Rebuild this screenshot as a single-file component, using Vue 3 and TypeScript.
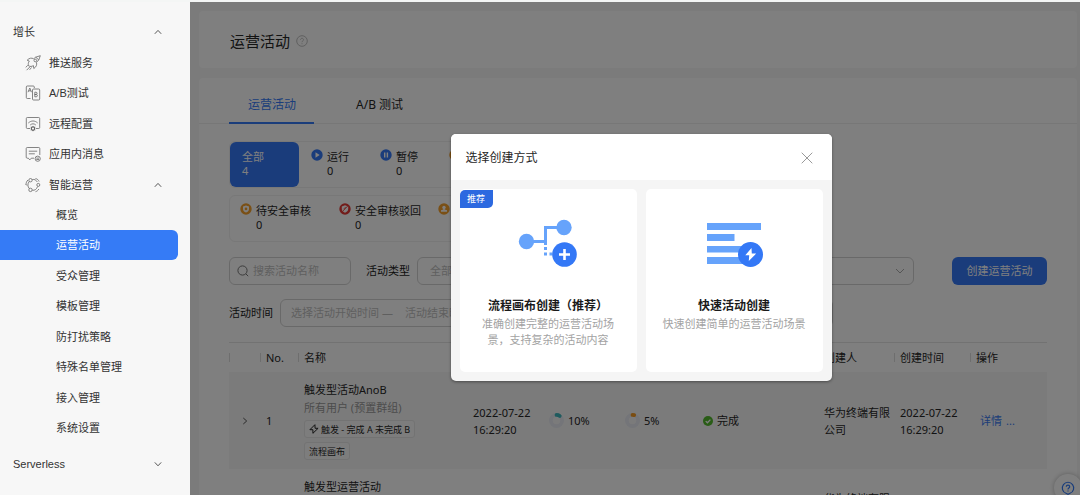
<script setup lang="ts">
import { ref } from 'vue'

interface Campaign {
  name: string
  audience: string
  trigger?: string
  kind: string
  time: [string, string]
  reach: number
  convert: number
  status: string
  creator: string
}

const services = ['推送服务', 'A/B测试', '远程配置', '应用内消息']
const pages = ['概览', '运营活动', '受众管理', '模板管理', '防打扰策略', '特殊名单管理', '接入管理', '系统设置']
const activePage = ref('运营活动')
const activeTab = ref('运营活动')
const keyword = ref('')

const campaigns: Campaign[] = [
  {
    name: '触发型活动AnoB',
    audience: '所有用户 (预置群组)',
    trigger: '触发 - 完成 A 未完成 B',
    kind: '流程画布',
    time: ['2022-07-22', '16:29:20'],
    reach: 10,
    convert: 5,
    status: '完成',
    creator: '华为终端有限公司',
  },
  {
    name: '触发型运营活动',
    audience: '所有用户 (预置群组)',
    kind: '流程画布',
    time: ['2022-07-22', '16:29:20'],
    reach: 10,
    convert: 5,
    status: '完成',
    creator: '华为终端有限公司',
  },
]
</script>

<template>
  <div class="shell">
    <nav class="sidebar" aria-label="主导航">
      <button class="row group" type="button">
        <span>增长</span>
        <svg class="chev" viewBox="0 0 8 8"><path d="M.8 5.8 4 2.4 7.2 5.8" /></svg>
      </button>
      <ul class="menu services">
        <li v-for="(name, i) in services" :key="name">
          <a class="row service" href="#">
            <svg v-if="i === 0" class="icon" viewBox="0 0 16 16">
              <path d="M15.300.7l-4.600 1.500-2 1.600C6.500 2.600 4.300 3 2.200 5.200l2.100.9c-1.100 1.500-1.300 3-.7 4.700 1.600 1 3.200.8 4.800-.2l.4 2.900c2.500-1.600 3.300-3.600 2.700-6.200l2.300-2.400z" />
              <circle cx="10.300" cy="5.500" r="1.300" />
              <path d="M10.700 2.200l3.100 2.700M2.800 10.300.7 12.400M4.900 11.900l-3.300 3.300M6.500 12.500l-1.900 2.300" />
            </svg>
            <svg v-else-if="i === 1" class="icon" viewBox="0 0 16 16">
              <path d="M5.500 13.500H2.300c-.7 0-1-.4-1-1V2c0-.7.4-1 1-1h6c.7 0 1 .4 1 1v1" />
              <rect x="7.500" y="4" width="7.200" height="11" rx="1" />
              <path d="M3 7.200 4.800 3l1.700 4.200M3.600 5.800h2.300M9.800 7.200v4.600h1.400c1.600 0 1.600-2.300 0-2.300H9.800h1.200c1.500 0 1.500-2.300 0-2.300z" />
            </svg>
            <svg v-else-if="i === 2" class="icon" viewBox="0 0 16 16">
              <path d="M5 12.500H2.300c-.7 0-1-.4-1-1V2.500c0-.7.4-1 1-1h11.400c.7 0 1 .4 1 1v9c0 .6-.3 1-1 1H11" />
              <path d="M3.300 7c3-2.700 6.400-2.700 9.400 0M5.200 9c1.900-1.600 3.700-1.600 5.600 0" />
              <circle cx="8" cy="12.600" r="1.700" stroke-width="1.200" />
              <path d="M8 10v.7M8 14.500v.7M5.700 11.300l.6.300M9.700 13.600l.6.300M10.300 11.300l-.6.300M6.300 13.600l-.6.300" />
            </svg>
            <svg v-else class="icon" viewBox="0 0 16 16">
              <path d="M9 12.200H6.300L4.800 13.900l-1.500-1.700H2.200c-.6 0-1-.4-1-1V2.500c0-.6.400-1 1-1h11.600c.6 0 1 .400 1 1V9M3.800 5.200h8.400M3.800 7.800h6" />
              <circle cx="12.700" cy="12.700" r="2.600" />
              <path d="M11.300 12.100h2.800M11.300 13.500h2.800" />
            </svg>
            <span>{{ name }}</span>
          </a>
        </li>
        <li>
          <button class="row service" type="button">
            <svg class="icon" viewBox="0 0 16 16">
              <circle cx="5.500" cy="3.200" r="1.700" />
              <circle cx="13.300" cy="7.900" r="1.500" />
              <circle cx="5.500" cy="12.900" r="1.700" />
              <path d="M7.300 2.600c2.100-.6 3.800.4 5 2.400M7.300 13.200c2.500.5 4.200-.9 5.300-3.700M4.200 4.500C2.400 6.700 2.500 9.600 4.300 11.600M10.500 1.500c1.800.4 3 1.500 3.600 3M1 8c0-2.200.6-3.600 1.900-5M10.500 14.700c1.500-.4 2.600-1.300 3.400-2.700M1.900 8.500 1 7.500" />
            </svg>
            <span>智能运营</span>
            <svg class="chev" viewBox="0 0 8 8"><path d="M.8 5.800 4 2.400 7.200 5.800" /></svg>
          </button>
        </li>
      </ul>
      <ul class="menu">
        <li v-for="name in pages" :key="name">
          <a class="row page" :class="{ active: name === activePage }" href="#" @click.prevent="activePage = name">{{ name }}</a>
        </li>
      </ul>
      <button class="row group last" type="button">
        <span>Serverless</span>
        <svg class="chev" viewBox="0 0 8 8"><path d="M.8 2.400 4 5.800 7.200 2.400" /></svg>
      </button>
    </nav>

    <div class="stage">
      <main class="content">
        <header class="card heading">
          <h1>运营活动</h1>
          <svg class="hint" viewBox="0 0 12 12">
            <circle cx="6" cy="6" r="5.300" />
            <path d="M4.500 4.800c0-2 3-2 3 0 0 1.100-1.500 1.100-1.500 2.400M6 8.300v.9" />
          </svg>
        </header>

        <section class="card board">
          <div class="tabs" role="tablist">
            <button v-for="tab in ['运营活动', 'A/B 测试']" :key="tab" class="tab" :class="{ on: tab === activeTab }" role="tab" type="button" :aria-selected="tab === activeTab" @click="activeTab = tab">{{ tab }}</button>
          </div>

          <div class="inner">
            <div class="stats">
              <button class="stat all" type="button"><span>全部</span><span>4</span></button>
              <button class="stat" type="button">
                <svg class="dot" viewBox="0 0 12 12"><circle cx="6" cy="6" r="5.700" fill="#3478f6" /><path d="M4.500 3.200 8.700 6 4.500 8.800z" fill="#fff" /></svg>
                <span>运行</span><span>0</span>
              </button>
              <button class="stat" type="button">
                <svg class="dot" viewBox="0 0 12 12"><circle cx="6" cy="6" r="5.700" fill="#3478f6" /><path d="M4 3.500h1.400v5H4zM6.700 3.500h1.400v5H6.700z" fill="#fff" /></svg>
                <span>暂停</span><span>0</span>
              </button>
              <button class="stat" type="button">
                <svg class="dot" viewBox="0 0 12 12"><circle cx="6" cy="6" r="5.700" fill="#f59a23" /><path d="M4 4h4v4H4z" fill="#fff" /></svg>
                <span>完成</span><span>0</span>
              </button>
            </div>
            <div class="stats review">
              <button class="stat" type="button">
                <svg class="dot" viewBox="0 0 12 12"><circle cx="6" cy="6" r="5.700" fill="#f5a02c" /><path d="M6 2.500l3 1v2.600c0 1.700-1.300 2.800-3 3.500-1.700-.7-3-1.800-3-3.500V3.500z" fill="#fff" /><circle cx="6" cy="5.900" r="1.300" fill="#f5a02c" /></svg>
                <span>待安全审核</span><span>0</span>
              </button>
              <button class="stat" type="button">
                <svg class="dot" viewBox="0 0 12 12"><circle cx="6" cy="6" r="5.700" fill="#e53935" /><path d="M6 2.300l3.200 1.100v2.700c0 1.800-1.400 2.900-3.200 3.600-1.800-.7-3.200-1.800-3.200-3.600V3.400z" fill="#fff" /><path d="M3.400 8.700 8.800 3M4.500 6.300l2.300-2.400" stroke="#e53935" stroke-width=".8" /></svg>
                <span>安全审核驳回</span><span>0</span>
              </button>
              <button class="stat" type="button">
                <svg class="dot" viewBox="0 0 12 12"><circle cx="6" cy="6" r="5.700" fill="#f5a02c" /><circle cx="6" cy="4.400" r="1.700" fill="#fff" /><path d="M5.300 5h1.400v1.500L9 7.200v1.500H3V7.200l2.300-.7z" fill="#fff" /></svg>
                <span>待审核</span><span>0</span>
              </button>
            </div>

            <form class="filters" @submit.prevent>
              <label class="field search">
                <svg viewBox="0 0 12 12"><circle cx="5.500" cy="5.500" r="4.600" /><path d="M8.900 8.900l2.300 2.300" /></svg>
                <input v-model="keyword" type="search" aria-label="搜索活动名称" placeholder="搜索活动名称" />
              </label>
              <label class="caption" for="kind">活动类型</label>
              <span class="field pick kind">
                <select id="kind"><option>全部</option></select>
                <svg viewBox="0 0 10 8"><path d="M1 2l4 4 4-4" /></svg>
              </span>
              <span class="field pick wide">
                <select aria-label="状态"><option>全部</option></select>
                <svg viewBox="0 0 10 8"><path d="M1 2l4 4 4-4" /></svg>
              </span>
              <button class="create" type="button">创建运营活动</button>
            </form>
            <div class="filters period">
              <label class="caption" for="from">活动时间</label>
              <span class="field range">
                <input id="from" type="text" placeholder="选择活动开始时间" />
                <span class="dash">—</span>
                <input type="text" aria-label="活动结束时间" placeholder="活动结束时间" />
              </span>
            </div>

            <table>
              <colgroup>
                <col class="w-open" /><col class="w-no" /><col /><col class="w-time" /><col class="w-time" /><col class="w-rate" /><col class="w-state" /><col class="w-time" /><col class="w-time" /><col class="w-ops" />
              </colgroup>
              <thead>
                <tr>
                  <th></th><th>No.</th><th>名称</th><th></th><th></th><th></th><th></th><th>创建人</th><th>创建时间</th><th>操作</th>
                </tr>
              </thead>
              <tbody>
                <tr v-for="(c, i) in campaigns" :key="c.name">
                  <td class="open">
                    <button type="button" aria-label="展开"><svg viewBox="0 0 8 8"><path d="M2.300 1 5.700 4 2.300 7" /></svg></button>
                  </td>
                  <td>{{ i + 1 }}</td>
                  <td>
                    <div class="name">{{ c.name }}</div>
                    <div class="audience">{{ c.audience }}</div>
                    <div class="tags">
                      <span v-if="c.trigger" class="tag">
                        <svg viewBox="0 0 10 10"><path d="M5.900.7.900 5.700h3L3.900 9.300l5.200-5h-3z" /></svg>{{ c.trigger }}
                      </span>
                      <span class="tag">{{ c.kind }}</span>
                    </div>
                  </td>
                  <td>{{ c.time[0] }}<br />{{ c.time[1] }}</td>
                  <td>
                    <span class="metric">
                      <svg class="ring" viewBox="0 0 16 16"><circle cx="8" cy="8" r="6" /><circle class="teal" cx="8" cy="8" r="6" pathLength="100" :stroke-dasharray="`${c.reach} 100`" /></svg>{{ c.reach }}%
                    </span>
                  </td>
                  <td>
                    <span class="metric">
                      <svg class="ring" viewBox="0 0 16 16"><circle cx="8" cy="8" r="6" /><circle class="amber" cx="8" cy="8" r="6" pathLength="100" :stroke-dasharray="`${c.convert} 100`" /></svg>{{ c.convert }}%
                    </span>
                  </td>
                  <td>
                    <span class="metric state">
                      <svg viewBox="0 0 10 10"><circle cx="5" cy="5" r="5" fill="#52b82c" /><path d="M2.700 5.100l1.700 1.700 3-3.200" fill="none" stroke="#fff" stroke-width="1.300" /></svg>{{ c.status }}
                    </span>
                  </td>
                  <td>{{ c.creator }}</td>
                  <td>{{ c.time[0] }}<br />{{ c.time[1] }}</td>
                  <td class="ops"><a href="#">详情</a><a href="#" aria-label="更多">...</a></td>
                </tr>
              </tbody>
            </table>
          </div>
        </section>

        <button class="help" type="button" aria-label="帮助">
          <svg viewBox="0 0 14 14">
            <path d="M5 12.300A5.700 5.700 0 1 1 9 12.300L7 13.300z" />
            <path d="M5.300 5.800c0-2.300 3.400-2.300 3.400 0C8.700 7.100 7 7 7 8.400M7 9.500v1" />
          </svg>
        </button>
      </main>

      <div class="mask">
        <div class="dialog" role="dialog" aria-modal="true" aria-labelledby="dialog-title">
          <header class="dialog-head">
            <h2 id="dialog-title">选择创建方式</h2>
            <button class="close" type="button" aria-label="关闭"><svg viewBox="0 0 12 12"><path d="M.7.700l10.600 10.600M11.300.700.700 11.300" /></svg></button>
          </header>
          <div class="choices">
            <button class="choice" type="button">
              <span class="badge">推荐</span>
              <svg class="art" viewBox="0 0 60 48">
                <g fill="none" stroke="#66a3fb" stroke-width="3">
                  <path d="M14 22.500h13.500V8.500H40" />
                  <path d="M27.500 24v2M27.500 28v3M27.500 33.500v3M31.500 35h3" />
                </g>
                <circle cx="8.500" cy="22.500" r="7.700" fill="#66a3fb" />
                <circle cx="46" cy="8.500" r="7.700" fill="#66a3fb" />
                <circle cx="46.500" cy="35.500" r="12.300" fill="#3478f6" />
                <path d="M46.500 30v11M41 35.500h11" stroke="#fff" stroke-width="2.600" />
              </svg>
              <strong>流程画布创建（推荐）</strong>
              <span class="desc">准确创建完整的运营活动场景，支持复杂的活动内容</span>
            </button>
            <button class="choice" type="button">
              <svg class="art" viewBox="0 0 60 48">
                <path d="M3 4h54v7H3zM3 15h27.500v7H3zM3 27h36v6.500H3zM3 38h40v7H3z" fill="#66a3fb" />
                <circle cx="46.500" cy="35.500" r="12.500" fill="#3478f6" />
                <path d="M47.500 29l-6.200 7.300h3.900L44.800 42l7.400-7.400h-4.400z" fill="#fff" />
              </svg>
              <strong>快速活动创建</strong>
              <span class="desc">快速创建简单的运营活动场景</span>
            </button>
          </div>
        </div>
      </div>
    </div>
  </div>
</template>

<style>
body {
  background: #f4f6f5;
}
</style>

<style scoped>
.shell {
  display: flex;
  box-sizing: border-box;
  height: 100vh;
  padding-top: 2px;
  overflow: hidden;
  font: 11px/18px "Noto Sans", "Noto Sans CJK SC", sans-serif;
  color: #262626;
}
.shell * {
  box-sizing: border-box;
}
button, input, select {
  margin: 0;
  padding: 0;
  border: 0;
  background: none;
  font: inherit;
  color: inherit;
}
a {
  color: inherit;
  text-decoration: none;
}
h1, h2 {
  margin: 0;
  font-weight: 400;
}
svg {
  flex: none;
  fill: none;
}

/* sidebar */
.sidebar {
  flex: none;
  width: 190px;
  padding: 15px 12px 0 0;
  background: #f7f7f7;
  font-family: "Liberation Sans", "Noto Sans CJK SC", sans-serif;
  color: #333;
}
.menu {
  margin: 0;
  padding: 0;
  list-style: none;
}
.services {
  padding-top: 1px;
}
.menu li:nth-child(even) {
  margin-bottom: 1px;
}
.row {
  display: flex;
  align-items: center;
  width: 100%;
  height: 30px;
  padding-right: 16px;
  text-align: left;
}
.group {
  padding-left: 13px;
}
.service {
  gap: 8px;
  padding-left: 25px;
}
.page {
  padding-left: 56px;
}
.page.active {
  border-radius: 0 6px 6px 0;
  background: #357bf6;
  color: #fff;
}
.last {
  margin-top: 6px;
}
.icon {
  width: 16px;
  height: 16px;
  stroke: #666;
  stroke-width: 0.8;
}
.chev {
  width: 8px;
  height: 8px;
  margin-left: auto;
  stroke: #555;
}

/* page */
.stage {
  position: relative;
  flex: 1;
  min-width: 0;
  overflow: hidden;
}
.content {
  display: flex;
  flex-direction: column;
  gap: 10px;
  height: 100%;
  padding: 9px 3px 0 9px;
  background: #f6f6f6;
}
.card {
  flex: none;
  border-radius: 4px;
  background: #fff;
}
.heading {
  display: flex;
  align-items: center;
  gap: 6px;
  height: 57px;
  padding: 2px 30px 0 31px;
}
h1 {
  font-size: 15px;
  line-height: 24px;
}
.hint {
  width: 12px;
  height: 12px;
  stroke: #b8b8b8;
  stroke-width: 0.9;
}
.tabs {
  display: flex;
  gap: 23px;
  height: 46px;
  padding: 8px 30px 0;
  border-bottom: 1px solid #efefef;
}
.tab {
  height: 38px;
  padding: 2px 18px 0 19px;
  border-bottom: 2px solid transparent;
  font-size: 12px;
}
.tab.on {
  border-color: #357bf6;
  color: #357bf6;
}
.inner {
  padding: 17px 30px 0;
}
.stats {
  display: flex;
  width: 60%;
  height: 47px;
  border: 1px solid #f0f0f0;
  border-radius: 6px;
}
.stat {
  position: relative;
  display: flex;
  flex-direction: column;
  flex: none;
  width: 69px;
  padding: 7px 0 0 28px;
  line-height: 15px;
  white-space: nowrap;
  text-align: left;
}
.stat > span:nth-of-type(2) {
  line-height: 13px;
}
.stat.all {
  padding-left: 12px;
  border-radius: 6px;
  background: #3478f6;
  color: #fff;
}
.dot {
  position: absolute;
  top: 7px;
  left: 12px;
  width: 12px;
  height: 12px;
}
.review {
  margin-top: 7px;
}
.review .stat {
  width: 99px;
  padding-left: 26px;
}
.review .dot {
  left: 10px;
}
.filters {
  display: flex;
  align-items: center;
  margin-top: 15px;
}
.field {
  display: flex;
  align-items: center;
  height: 28px;
  border: 1px solid #d3d3d3;
  border-radius: 6px;
  color: #bfbfbf;
}
.field input {
  min-width: 0;
  outline: 0;
}
.field input::placeholder {
  color: #bfbfbf;
  opacity: 1;
}
.period {
  margin-top: 14px;
}
.search {
  gap: 4px;
  width: 122px;
  padding: 0 7px;
}
.search svg {
  width: 12px;
  height: 12px;
  stroke: #777;
}
.search input {
  flex: 1;
}
.caption {
  color: #1a1a1a;
}
.search + .caption {
  margin-left: 15px;
}
.pick {
  padding: 0 8px 0 12px;
}
.pick select {
  flex: 1;
  appearance: none;
}
.pick svg {
  width: 10px;
  height: 8px;
  stroke: #aaa;
}
.kind {
  width: 160px;
  margin-left: 7px;
}
.wide {
  flex: 1;
  margin-left: 60px;
}
.create {
  width: 95px;
  height: 28px;
  margin-left: 38px;
  border-radius: 6px;
  background: #3478f6;
  color: #fff;
}
.range {
  width: 553px;
  margin-left: 7px;
  padding: 0 10px;
}
.range input {
  width: 91px;
}
.dash {
  width: 23px;
}

/* table */
table {
  width: 100%;
  margin-top: 15px;
  border-top: 1px solid #e4e4e4;
  border-spacing: 0;
  table-layout: fixed;
}
.w-open {
  width: 31px;
}
.w-no {
  width: 38px;
}
.w-time {
  width: 76px;
}
.w-rate {
  width: 78px;
}
.w-state {
  width: 121px;
}
.w-ops {
  width: 77px;
}
th, td {
  padding: 0 0 0 6px;
  text-align: left;
  font-weight: 400;
}
th {
  height: 29px;
  background: linear-gradient(#dcdcdc, #dcdcdc) 0 50% / 1px 9px no-repeat;
}
td {
  padding: 9px 0 9px 6px;
  line-height: 17px;
}
tbody tr:nth-child(odd) {
  background: #f7f7f7;
}
.open button {
  display: flex;
  margin-left: 6px;
}
.open svg {
  width: 8px;
  height: 8px;
  stroke: #555;
}
.name {
  line-height: 18px;
}
.audience {
  color: #999;
}
.tags {
  display: flex;
  flex-direction: column;
  align-items: flex-start;
  gap: 4px;
  padding-top: 4px;
}
.tag {
  display: flex;
  align-items: center;
  gap: 2px;
  height: 18px;
  padding: 0 4px;
  border: 1px solid #e6e6e6;
  border-radius: 3px;
  background: #fbfbfb;
  font-size: 9px;
  white-space: nowrap;
}
.tag svg {
  width: 10px;
  height: 10px;
  stroke: #222;
}
.metric {
  display: flex;
  align-items: center;
  gap: 4px;
}
.ring {
  width: 15px;
  height: 15px;
  stroke: #e8eaf2;
  stroke-width: 4;
  transform: rotate(-90deg);
}
.ring .teal {
  stroke: #3fb6bd;
  stroke-linecap: round;
}
.ring .amber {
  stroke: #f59a23;
  stroke-linecap: round;
}
.state svg {
  width: 10px;
  height: 10px;
}
.ops {
  padding-left: 10px;
  color: #3a7af0;
}
.ops a + a {
  margin-left: 4px;
}
.help {
  position: absolute;
  right: -2px;
  bottom: -7px;
  display: flex;
  align-items: center;
  justify-content: center;
  width: 28px;
  height: 28px;
  border-radius: 50%;
  background: #fff;
  box-shadow: 0 0 5px #bbb;
}
.help svg {
  width: 14px;
  height: 14px;
  stroke: #357bf6;
  stroke-width: 1.2;
}

/* dialog */
.mask {
  position: absolute;
  inset: 0;
  display: flex;
  align-items: flex-start;
  justify-content: center;
  padding: 132px 0 0 12px;
  background: rgba(0, 0, 0, 0.5);
}
.dialog {
  width: 381px;
  border-radius: 5px;
  overflow: hidden;
  background: #f5f5f5;
  box-shadow: 0 1px 3px rgba(0, 0, 0, 0.4);
}
.dialog-head {
  display: flex;
  align-items: center;
  justify-content: space-between;
  height: 46px;
  padding: 2px 19px 0 15px;
  background: #fff;
}
h2 {
  font-size: 12px;
  line-height: 18px;
}
.close {
  display: flex;
}
.close svg {
  width: 12px;
  height: 12px;
  stroke: #999;
}
.choices {
  display: grid;
  grid-template-columns: 1fr 1fr;
  gap: 9px;
  padding: 9px;
}
.choice {
  position: relative;
  display: flex;
  flex-direction: column;
  align-items: center;
  min-height: 182px;
  padding: 30px 14px 24px;
  border-radius: 5px;
  background: #fff;
}
.badge {
  position: absolute;
  top: 1px;
  left: 0;
  width: 33px;
  border-radius: 5px 0 5px 0;
  background: #2c69e0;
  color: #fff;
  font-size: 9px;
}
.art {
  width: 60px;
  height: 48px;
}
strong {
  margin-top: 29px;
  font-size: 12px;
  line-height: 20px;
  color: #1a1a1a;
}
.desc {
  line-height: 16px;
  color: #a3a3a3;
}
</style>
